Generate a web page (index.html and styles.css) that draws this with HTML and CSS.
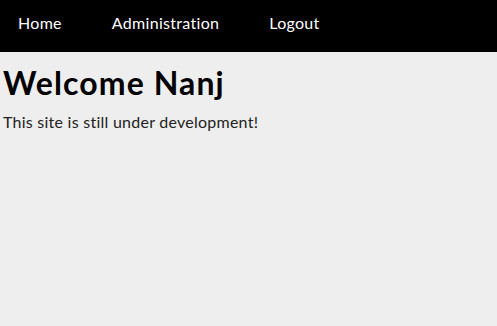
FILE: index.html
```html
<!DOCTYPE html>
<html lang="en">
<head>
  <meta charset="UTF-8">
  <title>Home</title>
  <link rel="stylesheet" href="styles.css">
</head>
<body>
  <nav class="navbar">
    <a href="#" class="nav-link">Home</a>
    <a href="#" class="nav-link">Administration</a>
    <a href="#" class="nav-link">Logout</a>
  </nav>

  <main class="content">
    <h1>Welcome Nanj</h1>
    <p>This site is still under development!</p>
  </main>
</body>
</html>
```

FILE: styles.css
```css
* {
  box-sizing: border-box;
}

body {
  margin: 0;
  font-family: 'Lato', 'Open Sans', sans-serif;
  background-color: #eeeeee;
  color: #000;
}

.navbar {
  display: flex;
  align-items: center;
  gap: 50px;
  height: 52px;
  padding: 0 18px 8px;
  background-color: #000;
}

.nav-link {
  color: #fff;
  text-decoration: none;
  font-size: 16px;
  letter-spacing: 0.3px;
}

.content {
  padding: 0 3px;
}

h1 {
  font-size: 32px;
  letter-spacing: 1.1px;
  margin: 11px 0 0;
}

p {
  font-size: 16px;
  letter-spacing: 0.25px;
  margin: 10px 0 0;
  color: #222;
}
```
